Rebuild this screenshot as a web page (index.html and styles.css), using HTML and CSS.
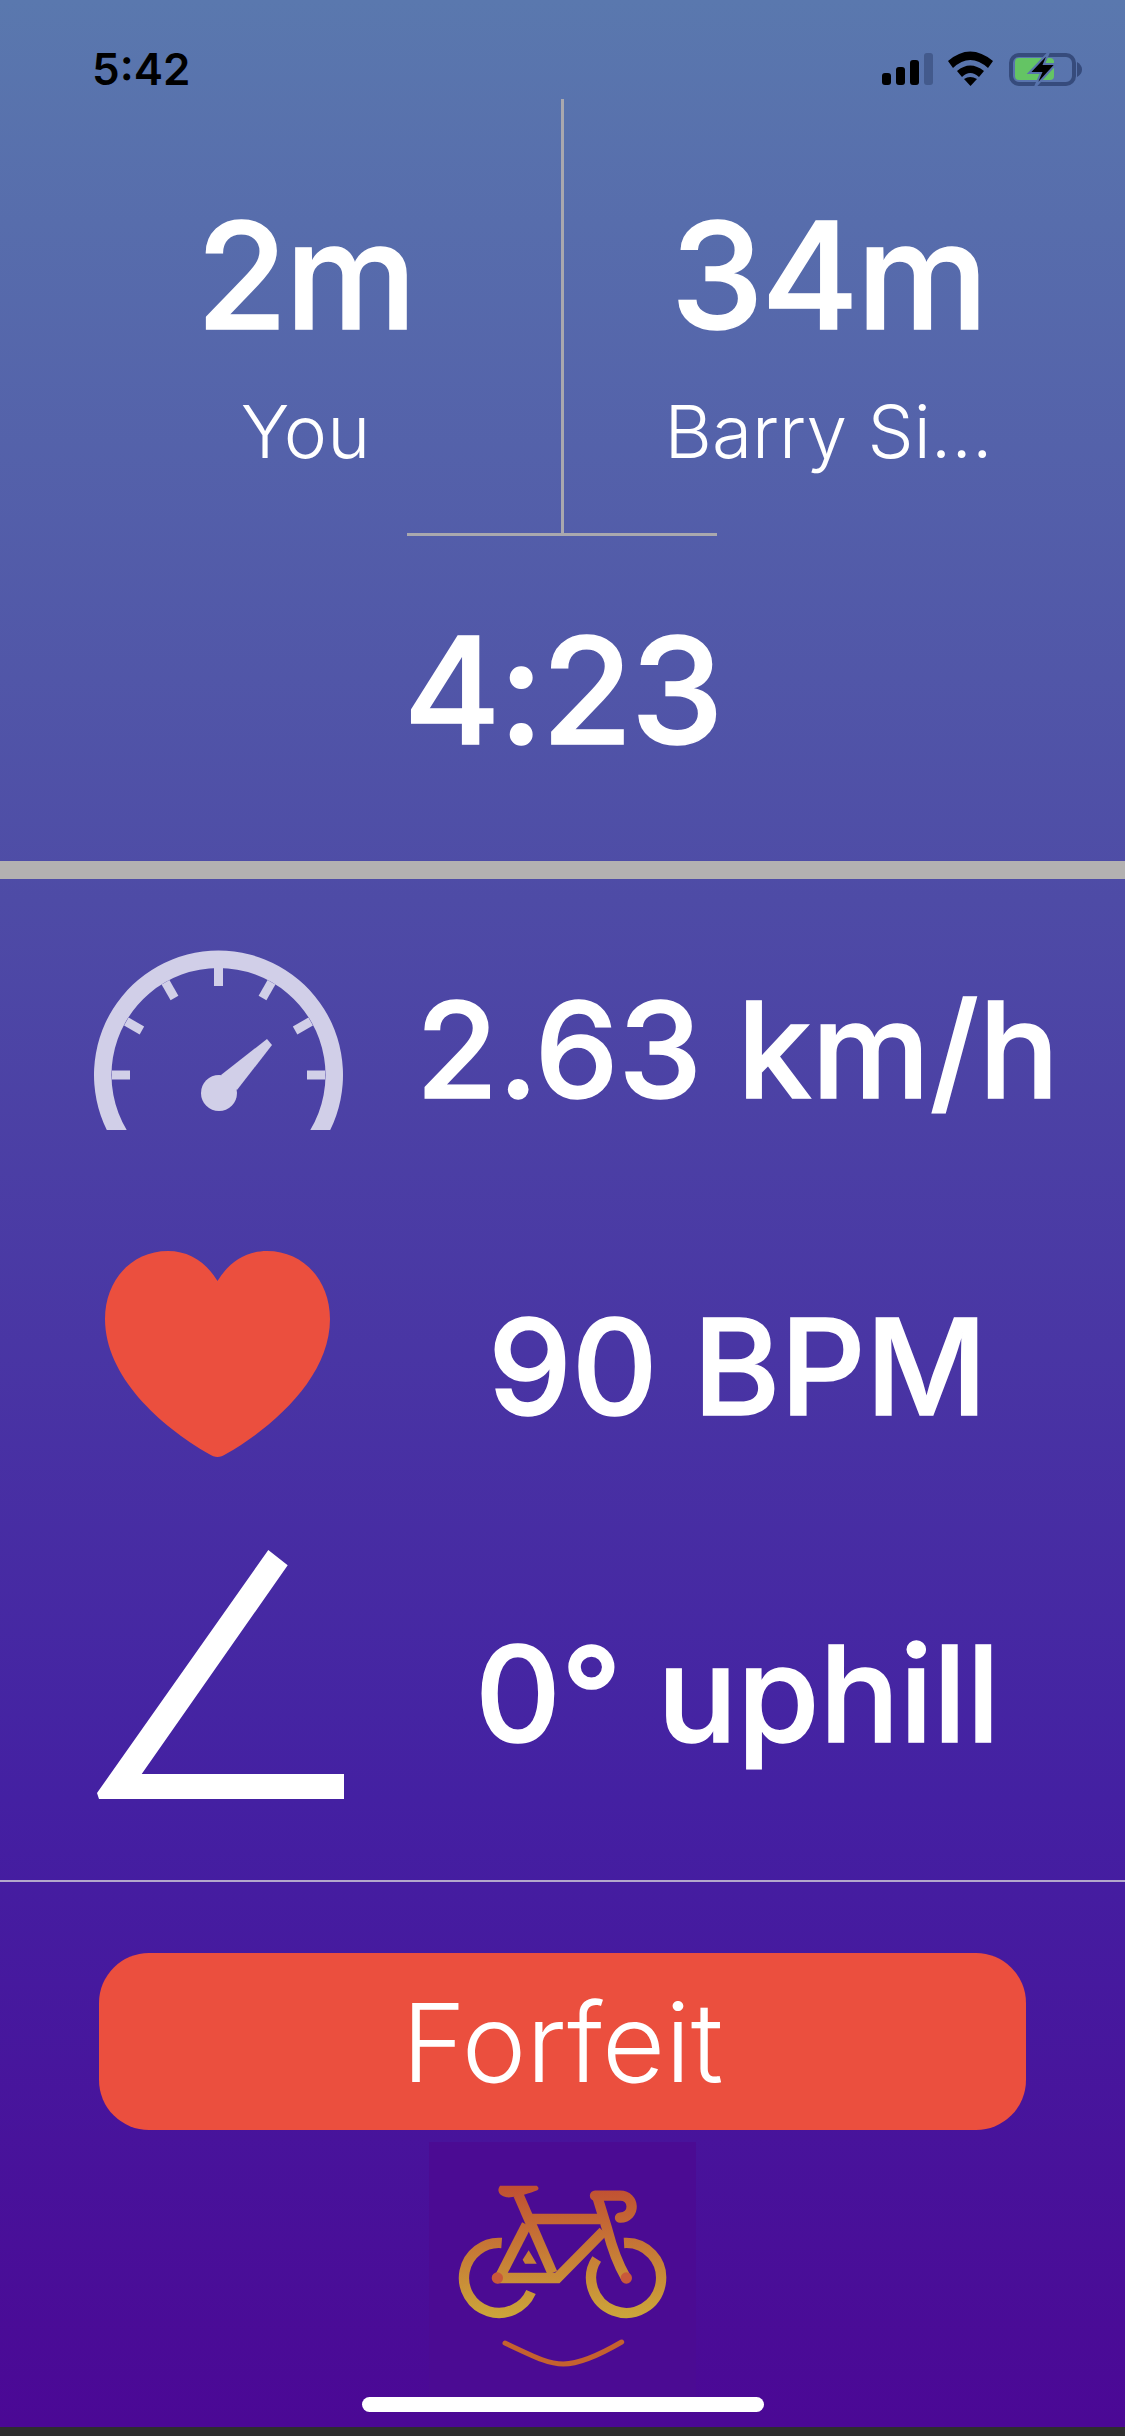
FILE: index.html
```html
<!DOCTYPE html>
<html lang="en">
<head>
    <meta charset="UTF-8">
    <meta name="viewport" content="width=device-width, initial-scale=1.0">
    <title>Race</title>
    <link rel="stylesheet" href="styles.css">
</head>
<body>
    <div class="screen">
        <div class="status">
            <span class="time">5:42</span>
            <svg class="status-icons" viewBox="880 50 204 38" width="204" height="38">
                <rect x="882" y="73" width="9" height="12" rx="3"/>
                <rect x="896" y="67" width="9" height="18" rx="3"/>
                <rect x="910" y="60" width="9" height="25" rx="3"/>
                <rect x="924" y="53" width="9" height="32" rx="3" fill="#435a8c"/>
                <path d="M948 61 Q970 42 993 61 L988 68 Q970 52 953 68Z"/>
                <path d="M957 71 Q970 60 984 71 L979 77 Q970 69 962 77Z"/>
                <path d="M964 79 Q970 75 977 79 L970.500 86Z"/>
                <rect x="1011" y="55" width="63" height="29" rx="8" fill="none" stroke="#364b7c" stroke-width="4"/>
                <path d="M1077 62 Q1082 65 1082 69.500 Q1082 74 1077 77Z" fill="#364b7c"/>
                <rect x="1015" y="58" width="39" height="22" rx="4" fill="#64c464"/>
                <path d="M1049 52 L1029 73 H1041 L1035 87 L1056 64 H1044Z" stroke="#5873ac" stroke-width="2"/>
            </svg>
        </div>

        <div class="scores">
            <div class="score">
                <div class="score-num">2m</div>
                <div class="score-name">You</div>
            </div>
            <div class="score">
                <div class="score-num">34m</div>
                <div class="score-name">Barry Si…</div>
            </div>
        </div>
        <div class="score-rule"></div>
        <div class="timer">4:23</div>

        <div class="thick-rule"></div>

        <div class="stats">
            <div class="stat stat-speed">
                <svg class="stat-icon" viewBox="0 0 250 180" width="250" height="180">
                    <g fill="#d1cfe8">
                        <path d="M12.800 180 A124.500 124.500 0 1 1 236.200 180 H216.300 A107 107 0 1 0 32.700 180Z"/>
                        <circle cx="125" cy="143" r="18"/>
                        <path d="M127 125 L173 89 L178 95 L143 140Z"/>
                    </g>
                    <g stroke="#d1cfe8" stroke-width="9">
                        <path d="M18 125 H36"/>
                        <path d="M32.300 71.500 L47.900 80.500"/>
                        <path d="M71.500 32.300 L80.500 47.900"/>
                        <path d="M124.500 18 V36"/>
                        <path d="M177.500 32.300 L168.500 47.900"/>
                        <path d="M216.700 71.500 L201.100 80.500"/>
                        <path d="M231 125 H213"/>
                    </g>
                </svg>
                <div class="stat-value">2.63 km/h</div>
            </div>
            <div class="stat stat-heart">
                <svg class="stat-icon" viewBox="0 0 225 207" width="225" height="207">
                    <path fill="#eb4f3e" d="M112.500 30 C101 11 84 0 63 0 C27 0 0 29 0 68 C0 125 55 175 104 203 C110 207 115 207 121 203 C170 175 225 125 225 68 C225 29 198 0 162 0 C141 0 124 11 112.500 30Z"/>
                </svg>
                <div class="stat-value">90 BPM</div>
            </div>
            <div class="stat stat-angle">
                <svg class="stat-icon" viewBox="0 0 247 249" width="247" height="249">
                    <path fill="#fff" d="M171.300 0 L190.700 15.300 L44.700 224 H247 V249 H2 L0 243Z"/>
                </svg>
                <div class="stat-value">0° uphill</div>
            </div>
        </div>

        <div class="thin-rule"></div>

        <div class="actions">
            <button class="forfeit">Forfeit</button>
        </div>

        <div class="logo">
            <svg viewBox="87 37 801 801" width="267" height="267">
                <defs>
                    <linearGradient id="bike" gradientUnits="userSpaceOnUse" x1="0" y1="170" x2="0" y2="560">
                        <stop offset="0" stop-color="#c14f32"/>
                        <stop offset="1" stop-color="#cca53a"/>
                    </linearGradient>
                </defs>
                <g fill="none" stroke="url(#bike)" stroke-width="31">
                    <path d="M305 340 A105 105 0 1 0 393 487"/>
                    <path d="M672 340 A105 105 0 1 1 590 388"/>
                    <path d="M298 445 L380 285"/>
                    <path d="M292 445 H472 L610 305"/>
                    <path d="M355 195 L457 430"/>
                    <path d="M385 268 H600"/>
                    <path d="M590 195 L622 300 C640 370 655 405 678 445"/>
                    <path d="M585 198 H660 C705 198 708 262 660 264" stroke-linecap="round"/>
                </g>
                <path fill="url(#bike)" d="M300 168 H410 Q420 175 412 182 C390 190 350 205 320 203 C300 200 288 185 300 168Z"/>
                <path fill="url(#bike)" d="M386 362 L410 402 H375 L368 390Z"/>
                <circle cx="292" cy="445" r="17" fill="#c9583a"/>
                <circle cx="679" cy="445" r="17" fill="#c9583a"/>
                <path fill="none" stroke="#c5612f" stroke-width="15" stroke-linecap="round" d="M315 640 C420 690 450 703 490 703 C540 703 600 675 665 637"/>
            </svg>
        </div>

        <div class="home-bar"></div>
        <div class="bottom-strip"></div>
    </div>
</body>
</html>
```

FILE: styles.css
```css
html, body {
    margin: 0;
    padding: 0;
}
body {
    font-family: Inter, "Noto Sans", sans-serif;
    color: white;
}
.screen {
    width: 1125px;
    height: 2436px;
    overflow: hidden;
    position: relative;
    display: flex;
    flex-direction: column;
    background: linear-gradient(#5a78ae 0, #4e4ba6 900px, #4420a2 1800px, #4b0895 2427px);
}
.status {
    height: 99px;
    display: flex;
    justify-content: space-between;
    align-items: flex-start;
    padding: 50px 41px 0 92px;
    box-sizing: border-box;
}
.time {
    font-size: 44px;
    font-weight: 600;
    line-height: 38px;
    color: #000;
}
.status-icons {
    display: block;
}
.scores {
    height: 434px;
    display: grid;
    grid-template-columns: 564px 561px;
}
.score {
    display: flex;
    flex-direction: column;
    align-items: center;
    padding-top: 107px;
    box-sizing: border-box;
}
.score:first-child {
    border-right: 3px solid #a9a8ae;
    padding-left: 50px;
}
.score:last-child {
    padding-right: 32px;
}
.score-num {
    font-size: 148px;
    font-weight: 500;
    letter-spacing: -2px;
    -webkit-text-stroke: 1.5px white;
    line-height: 140px;
}
.score-name {
    font-size: 73px;
    font-weight: 300;
    line-height: 100px;
    margin-top: 36px;
}
.score-rule {
    width: 310px;
    height: 3px;
    margin-left: 407px;
    background-color: #a9a8ae;
}
.timer {
    height: 325px;
    text-align: center;
    font-size: 148px;
    font-weight: 500;
    letter-spacing: -2px;
    -webkit-text-stroke: 1.5px white;
    line-height: 309px;
}
.thick-rule {
    height: 18px;
    background-color: #b3b1b1;
}
.stats {
    height: 1001px;
    display: flex;
    flex-direction: column;
}
.stat {
    display: grid;
    grid-template-columns: 350px 1fr;
    align-items: center;
}
.stat-speed {
    height: 340px;
}
.stat-heart {
    height: 294px;
}
.stat-angle {
    height: 361px;
}
.stat-icon {
    display: block;
    margin-left: 94px;
    margin-bottom: 18px;
}
.stat-heart .stat-icon {
    margin-left: 105px;
    margin-bottom: 24px;
}
.stat-angle .stat-icon {
    margin-left: 97px;
    margin-bottom: 38px;
}
.stat-value {
    text-align: center;
    font-size: 133px;
    font-weight: 500;
    -webkit-text-stroke: 1.5px white;
    white-space: nowrap;
}
.thin-rule {
    height: 2px;
    background-color: #b3a8cc;
}
.actions {
    padding: 71px 99px 0;
}
.forfeit {
    display: block;
    width: 100%;
    height: 177px;
    border: none;
    border-radius: 50px;
    background-color: #eb4f3e;
    color: white;
    font-family: inherit;
    font-size: 109px;
    font-weight: 300;
    padding: 0;
}
.logo {
    width: 267px;
    height: 267px;
    margin: 12px 0 0 429px;
    background-color: #4b0b93;
}
.logo svg {
    display: block;
}
/* these two sit on top of the logo box at the very bottom */
.home-bar {
    position: absolute;
    left: 362px;
    top: 2397px;
    width: 402px;
    height: 15px;
    border-radius: 8px;
    background-color: white;
}
.bottom-strip {
    position: absolute;
    left: 0;
    right: 0;
    top: 2427px;
    height: 9px;
    background-color: #2e2e2e;
}
```
